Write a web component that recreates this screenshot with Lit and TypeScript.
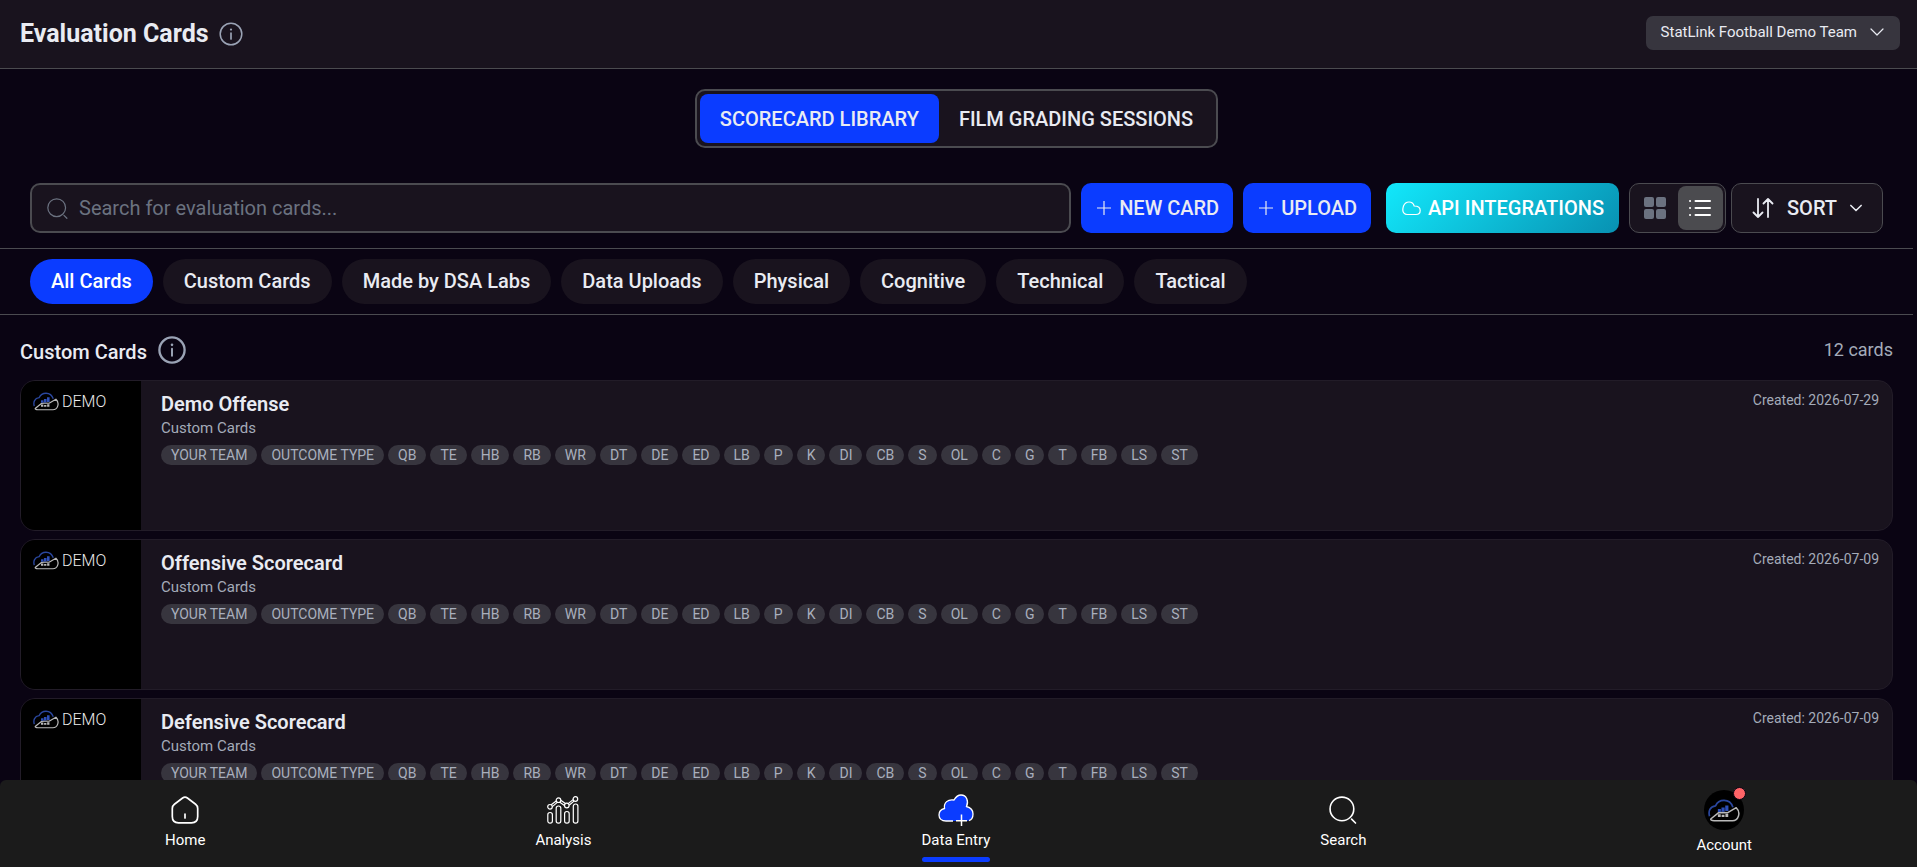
import { LitElement, html, css, svg } from "lit";
import { customElement, state } from "lit/decorators.js";

const TAGS = [
  "YOUR TEAM", "OUTCOME TYPE", "QB", "TE", "HB", "RB", "WR", "DT", "DE", "ED", "LB", "P",
  "K", "DI", "CB", "S", "OL", "C", "G", "T", "FB", "LS", "ST",
];

const CARDS = [
  { title: "Demo Offense", group: "Custom Cards", created: "2026-07-29" },
  { title: "Offensive Scorecard", group: "Custom Cards", created: "2026-07-09" },
  { title: "Defensive Scorecard", group: "Custom Cards", created: "2026-07-09" },
];

const FILTERS = [
  "All Cards", "Custom Cards", "Made by DSA Labs", "Data Uploads",
  "Physical", "Cognitive", "Technical", "Tactical",
];

const infoIcon = (size: number, stroke: number) => html`
  <svg width=${size} height=${size} viewBox="0 0 24 24" fill="none" aria-hidden="true">
    <circle cx="12" cy="12" r="10.8" stroke="currentColor" stroke-width=${stroke} />
    <path d="M12 11v6" stroke="currentColor" stroke-width="1.7" stroke-linecap="round" />
    <circle cx="12" cy="7.6" r="1.1" fill="currentColor" />
  </svg>
`;

const plusIcon = html`
  <svg width="16" height="16" viewBox="0 0 16 16" fill="none" aria-hidden="true">
    <path d="M8 1v14M1 8h14" stroke="currentColor" stroke-width="1.2" />
  </svg>
`;

const chevron = (w: number, stroke: number) => html`
  <svg width=${w} height=${w} viewBox="0 0 14 14" fill="none" aria-hidden="true">
    <path d="M1 4l6 6 6-6" stroke="currentColor" stroke-width=${stroke} stroke-linecap="round" stroke-linejoin="round" />
  </svg>
`;

const magnifier = (size: number, stroke: number) => html`
  <svg width=${size} height=${size} viewBox="0 0 26 26" fill="none" aria-hidden="true">
    <circle cx="12" cy="12" r="11" stroke="currentColor" stroke-width=${stroke} />
    <path d="M21 21.500l3.600 3.600" stroke="currentColor" stroke-width=${stroke} stroke-linecap="round" />
  </svg>
`;

const brandShape = svg`
  <path d="M1.600 18C0.200 13 2 7.600 8 7C10 2.500 13.500 1.200 17 1.200C22 1.200 25 4 26.500 8.500" stroke="#2a479f" stroke-width="1.800" />
  <path d="M3.200 20.800L11 14.500L15 14L21 14.300L30 9C32.600 11.500 33.300 15 32.300 18C31.200 21.300 29 22.800 26 22.800H6.500C4 22.800 2.200 21.800 3.200 20.800Z" stroke="#b9b9b9" stroke-width="1.600" stroke-linejoin="round" />
  <path d="M10.500 10.500h3.200v3.200h-3.200zM14.300 8.800h3.400v4.400h-3.400zM18.300 6.600h3.400v6h-3.400z" fill="#2d4fb8" />
  <path d="M10.500 16h3v3h-3zM14.500 16.500h3v2.500h-3zM18.500 15.500h3v3.500h-3z" fill="#b9b9b9" />
`;

const brand = (w: number, h: number) => html`
  <svg width=${w} height=${h} viewBox="0 0 34 24" fill="none" aria-hidden="true">${brandShape}</svg>
`;

const homeIcon = html`
  <svg width="30" height="30" viewBox="0 0 30 30" fill="none" aria-hidden="true">
    <path d="M12.600 3L4.400 9.200C2.800 10.400 2.300 11.600 2.300 13.500V21.500C2.300 25.800 4.500 27.800 8.500 27.800H21.500C25.500 27.800 27.700 25.800 27.700 21.500V13.500C27.700 11.600 27.200 10.400 25.600 9.200L17.400 3C15.900 1.900 14.100 1.900 12.600 3Z" stroke="currentColor" stroke-width="1.700" />
    <path d="M15 19v4" stroke="currentColor" stroke-width="1.700" stroke-linecap="round" />
  </svg>
`;

const analysisIcon = html`
  <svg width="32" height="28" viewBox="0 0 32 28" fill="none" stroke="currentColor" stroke-width="1.200" aria-hidden="true">
    <rect x="0.800" y="16.500" width="4.600" height="10.700" rx="2.200" />
    <rect x="9.200" y="10" width="4.600" height="17.200" rx="2.200" />
    <rect x="17.600" y="15.500" width="4.600" height="11.700" rx="2.200" />
    <rect x="26.300" y="8" width="4.600" height="19.200" rx="2.200" />
    <circle cx="3" cy="10.800" r="2.300" />
    <circle cx="11.500" cy="4.200" r="2.300" />
    <circle cx="19.800" cy="9.500" r="2.300" />
    <circle cx="28.400" cy="3" r="2.300" />
    <path d="M4.200 8.700L9.200 4.900M5.300 10.600L10.300 6.400M13.800 4.300L18.400 7.500M12.800 6.300L17.500 9.400M21.200 7.600L26.100 3.600M22.100 9.300L27 5.100" />
  </svg>
`;

const dataIcon = html`
  <svg width="36" height="32" viewBox="0 0 36 32" fill="none" aria-hidden="true">
    <path d="M8 27C3.500 27 1 24.500 1 21C1 17.500 3 15.200 6.500 14.500C5.500 8.500 10 5 16 6C18 2.500 20 1 23 1C28.500 1 31 7 28.500 12.500C32.500 13.500 35 16 35 20C35 24.500 32 27 28 27Z" fill="#0b3cff" />
    <path d="M15 27H8C3.500 27 1 24.500 1 21C1 17.500 3 15.200 6.500 14.500C5.500 8.500 10 5 16 6C18 2.500 20 1 23 1C28.500 1 31 7 28.500 12.500C32.500 13.500 35 16 35 20C35 23.500 33.500 25.800 31 26.600" stroke="#fff" stroke-width="1.300" />
    <path d="M23.500 20.500v11.500M18 26.800h11" stroke="#fff" stroke-width="1.500" />
  </svg>
`;

const NAV = [
  { label: "Home", icon: homeIcon },
  { label: "Analysis", icon: analysisIcon },
  { label: "Data Entry", icon: dataIcon },
  { label: "Search", icon: magnifier(28, 1.5) },
];

@customElement("app-root")
export class AppRoot extends LitElement {
  @state() private filter = "All Cards";
  @state() private tab = 0;
  @state() private view = "list";

  static styles = css`
    :host {
      display: flex;
      flex-direction: column;
      height: 100vh;
      overflow: hidden;
      background: #0a0413;
      color: #e9ebf2;
      font-family: Roboto, "Liberation Sans", sans-serif;
      font-size: 20px;
    }
    * { box-sizing: border-box; }
    button, input { font: inherit; color: inherit; }
    button { cursor: pointer; border: 0; background: none; padding: 0; }
    svg { display: block; flex: none; }
    h1, h2, h3, p, ul { margin: 0; padding: 0; }

    .header {
      display: flex;
      align-items: center;
      justify-content: space-between;
      flex: none;
      height: 69px;
      padding: 0 17px 0 20px;
      background: #19131e;
      border-bottom: 1px solid #4b4b4f;
    }
    .heading { display: flex; align-items: center; gap: 10px; }
    .heading h1 { font-size: 25px; font-weight: 700; line-height: 32px; }
    .info { color: #9aa3b5; }
    .team {
      display: flex;
      align-items: center;
      gap: 13px;
      height: 34px;
      padding: 0 16px 2px 15px;
      margin-bottom: 2px;
      border-radius: 7px;
      background: #37353e;
      font-size: 15px;
      line-height: 20px;
    }

    .page { flex: 1; min-height: 0; overflow: hidden; margin-right: 4px; }
    .tabs-row { display: flex; justify-content: center; padding: 20px 0 35px; }
    .tabs {
      display: flex;
      padding: 3px;
      border: 2px solid #4b4b50;
      border-radius: 10px;
      background: #19131e;
    }
    .tab {
      height: 49px;
      padding: 0 20px;
      border-radius: 8px;
      font-weight: 500;
    }
    .tab.on { background: #0b3cff; }

    .toolbar {
      display: flex;
      align-items: center;
      padding: 0 30px 15px;
      border-bottom: 1px solid #4b4b50;
    }
    .search {
      display: flex;
      align-items: center;
      gap: 11px;
      flex: 1;
      height: 50px;
      padding: 0 15px;
      margin-right: 10px;
      border: 2px solid #4b4b50;
      border-radius: 10px;
      background: #19131e;
      color: #6b7280;
    }
    .search input {
      flex: 1;
      min-width: 0;
      padding: 0;
      border: 0;
      outline: 0;
      background: none;
      color: #e9ebf2;
    }
    .search input::placeholder { color: #6b7280; opacity: 1; }
    .action {
      display: flex;
      align-items: center;
      gap: 7px;
      height: 50px;
      padding: 0 14px 0 15px;
      margin-right: 10px;
      border-radius: 10px;
      background: #0b3cff;
      font-weight: 500;
      white-space: nowrap;
    }
    .action.api {
      padding: 0 15px 0 16px;
      margin-left: 5px;
      background: linear-gradient(135deg, #12e8fb, #0891b2);
      color: #fff;
    }
    .views {
      display: flex;
      width: 97px;
      height: 50px;
      padding: 2px;
      margin-right: 5px;
      border: 1px solid #4b4b50;
      border-radius: 10px;
      background: #19131e;
    }
    .views button {
      flex: 1;
      display: grid;
      place-items: center;
      border-radius: 8px;
      color: #6b7280;
    }
    .views button.on { background: #4b4b4f; color: #fff; }
    .sort {
      display: flex;
      align-items: center;
      height: 50px;
      padding: 0 20px;
      gap: 13px;
      border: 1px solid #4b4b50;
      border-radius: 10px;
      background: #19131e;
      font-weight: 500;
    }

    .filters {
      display: flex;
      gap: 10px;
      padding: 10px 30px;
      border-bottom: 1px solid #4b4b50;
    }
    .chip {
      height: 45px;
      padding: 0 21px 2px;
      border-radius: 23px;
      background: #19131e;
      font-weight: 500;
      white-space: nowrap;
    }
    .chip.on { background: #0b3cff; color: #fff; }

    .section-head {
      display: flex;
      align-items: center;
      justify-content: space-between;
      padding: 21px 20px 16px;
    }
    .section-title { display: flex; align-items: center; gap: 11px; }
    .section-title h2 { padding-top: 4px; font-size: 20px; font-weight: 500; line-height: 24px; }
    .count { font-size: 18px; color: #a4abb9; line-height: 28px; }

    .cards { display: grid; gap: 8px; padding: 0 20px; list-style: none; }
    .card {
      display: flex;
      height: 151px;
      overflow: hidden;
      border: 1px solid #221c28;
      border-radius: 15px;
      background: #19131e;
    }
    .thumb {
      display: flex;
      align-items: flex-start;
      gap: 3px;
      flex: none;
      width: 120px;
      padding: 11px 12px;
      background: #000;
      color: #ececec;
      font-size: 16px;
      font-weight: 300;
      line-height: 20px;
    }
    .body { flex: 1; min-width: 0; padding: 10px 20px; }
    .body h3 { font-size: 20px; font-weight: 600; line-height: 26px; }
    .group { font-size: 15px; line-height: 22px; color: #a4abb9; }
    .tags { display: flex; flex-wrap: wrap; gap: 4px; padding-top: 6px; }
    .tag {
      padding: 0 10px;
      border-radius: 10px;
      background: #37353e;
      color: #a9afbd;
      font-size: 14px;
      line-height: 20px;
    }
    .created { padding: 9px 13px; font-size: 14px; line-height: 20px; color: #a4abb9; }

    .nav {
      display: flex;
      justify-content: space-around;
      flex: none;
      height: 87px;
      border-radius: 6px 6px 0 0;
      background: #1b1b1b;
    }
    .nav a {
      position: relative;
      display: flex;
      flex-direction: column;
      align-items: center;
      padding-top: 14px;
      color: #fff;
      font-size: 15px;
      line-height: 20px;
      text-decoration: none;
    }
    .icon { display: grid; place-items: center; height: 32px; margin-bottom: 4px; }
    .underline { width: 100%; height: 5px; margin-top: 7px; border-radius: 3px; background: #0b3cff; }
    .nav a.account { padding-top: 10px; }
    .avatar {
      position: relative;
      display: grid;
      place-items: center;
      width: 40px;
      height: 40px;
      margin-bottom: 5px;
      border-radius: 50%;
      background: #000;
    }
    .dot {
      position: absolute;
      top: -3px;
      right: -2px;
      width: 13px;
      height: 13px;
      border: 1px solid #0a0413;
      border-radius: 50%;
      background: #ff6467;
    }
  `;

  render() {
    return html`
      <header class="header">
        <div class="heading">
          <h1>Evaluation Cards</h1>
          <button class="info" aria-label="About evaluation cards">${infoIcon(24, 1.5)}</button>
        </div>
        <button class="team">StatLink Football Demo Team ${chevron(14, 1.2)}</button>
      </header>

      <main class="page">
        <div class="tabs-row">
          <div class="tabs" role="tablist">
            ${["SCORECARD LIBRARY", "FILM GRADING SESSIONS"].map((t, i) => html`
              <button role="tab" class="tab ${this.tab === i ? "on" : ""}" aria-selected=${this.tab === i}
                @click=${() => (this.tab = i)}>${t}</button>`)}
          </div>
        </div>

        <div class="toolbar">
          <label class="search">
            ${magnifier(21, 1.5)}
            <input type="text" aria-label="Search for evaluation cards" placeholder="Search for evaluation cards..." />
          </label>
          <button class="action">${plusIcon}NEW CARD</button>
          <button class="action">${plusIcon}UPLOAD</button>
          <button class="action api">
            <svg width="19" height="15" viewBox="0 0 19 15" fill="none" aria-hidden="true">
              <path d="M5 13.500C2.500 13.500 .8 11.500 .8 9C.8 7 1.200 6 1.500 5C2.500 2.500 4.500 1 7 1C9.500 1 11.500 2.500 12.200 5C16 5 18.200 7 18.200 9.500C18.200 12 16.500 13.500 14 13.500Z" stroke="currentColor" stroke-width="1.200" />
            </svg>
            API INTEGRATIONS
          </button>
          <div class="views">
            <button class=${this.view === "grid" ? "on" : ""} aria-label="Grid view" @click=${() => (this.view = "grid")}>
              <svg width="22" height="22" viewBox="0 0 22 22" fill="currentColor" aria-hidden="true">
                <rect x="0" y="0" width="10" height="10" rx="2" /><rect x="12" y="0" width="10" height="10" rx="2" />
                <rect x="0" y="12" width="10" height="10" rx="2" /><rect x="12" y="12" width="10" height="10" rx="2" />
              </svg>
            </button>
            <button class=${this.view === "list" ? "on" : ""} aria-label="List view" @click=${() => (this.view = "list")}>
              <svg width="22" height="18" viewBox="0 0 22 18" fill="none" stroke="currentColor" stroke-width="2" stroke-linecap="round" aria-hidden="true">
                <path d="M6.500 2H21M6.500 9H21M6.500 16H21M1 2h.1M1 9h.1M1 16h.1" />
              </svg>
            </button>
          </div>
          <button class="sort">
            <svg width="22" height="20" viewBox="0 0 22 20" fill="none" stroke="currentColor" stroke-width="1.800" stroke-linecap="round" stroke-linejoin="round" aria-hidden="true">
              <path d="M6 1v18M1.500 14.500L6 19l4.500-4.500M16 19V1M11.500 5.500L16 1l4.500 4.500" />
            </svg>
            SORT ${chevron(12, 1.8)}
          </button>
        </div>

        <div class="filters">
          ${FILTERS.map((f) => html`
            <button class="chip ${this.filter === f ? "on" : ""}" @click=${() => (this.filter = f)}>${f}</button>`)}
        </div>

        <div class="section-head">
          <div class="section-title">
            <h2>Custom Cards</h2>
            <button class="info" aria-label="About custom cards">${infoIcon(28, 2)}</button>
          </div>
          <p class="count">12 cards</p>
        </div>

        <ul class="cards">
          ${CARDS.map((c) => html`
            <li class="card">
              <div class="thumb">${brand(26, 19)}DEMO</div>
              <div class="body">
                <h3>${c.title}</h3>
                <p class="group">${c.group}</p>
                <div class="tags">${TAGS.map((t) => html`<span class="tag">${t}</span>`)}</div>
              </div>
              <p class="created">Created: ${c.created}</p>
            </li>`)}
        </ul>
      </main>

      <nav class="nav">
        ${NAV.map((n) => html`
          <a href="#">
            <span class="icon">${n.icon}</span>${n.label}
            ${n.label === "Data Entry" ? html`<span class="underline"></span>` : ""}
          </a>`)}
        <a href="#" class="account">
          <span class="avatar">${brand(32, 23)}<span class="dot"></span></span>Account
        </a>
      </nav>
    `;
  }
}
